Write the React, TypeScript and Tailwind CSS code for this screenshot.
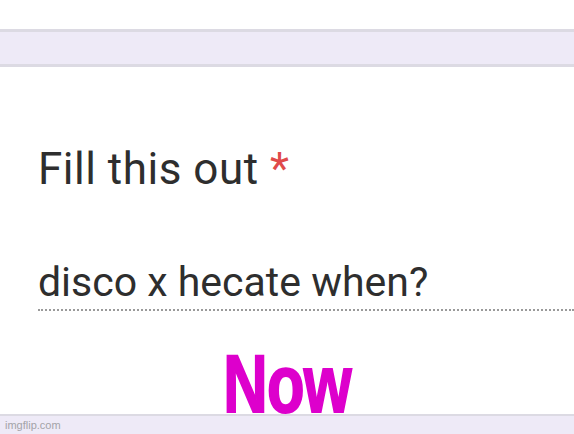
import * as React from "react";

const App: React.FC = () => {
  return (
    <div className="w-[574px] h-[434px] bg-white flex flex-col overflow-hidden font-['Roboto',sans-serif]">
      {/* top band */}
      <div className="h-[29px] shrink-0" />
      <div className="h-[38px] shrink-0 bg-[#eeeaf7] border-y-[3px] border-[#dcdae3]" />

      {/* question card */}
      <div className="flex flex-col pl-[38px] pt-[78px]">
        <p className="text-[44px] leading-[48px] text-[#2e2e2e] tracking-[0.5px]">
          Fill this out <span className="text-[#e04a4a]">*</span>
        </p>
        <p className="mt-[68px] text-[41px] leading-[42px] text-[#2e2e2e]">
          disco x hecate when?
        </p>
        <div className="mt-[6px] border-b-2 border-dotted border-[#9a9a9a]" />
      </div>

      {/* caption */}
      <div className="flex justify-center pl-[1px] mt-[48px]">
        <span className="font-['Liberation_Sans',sans-serif] font-bold text-[82px] leading-[50px] text-[#dd00cc] scale-x-[0.75] tracking-[-1px] [-webkit-text-stroke:2px_#dd00cc]">
          Now
        </span>
      </div>

      {/* footer */}
      <div className="mt-auto h-[20px] shrink-0 bg-[#eeeaf7] border-t-2 border-[#dcdae3] flex items-center px-[5px]">
        <span className="text-[11px] text-[#a3a3a8] font-['Liberation_Sans',sans-serif]">imgflip.com</span>
      </div>
    </div>
  );
};

export default App;
